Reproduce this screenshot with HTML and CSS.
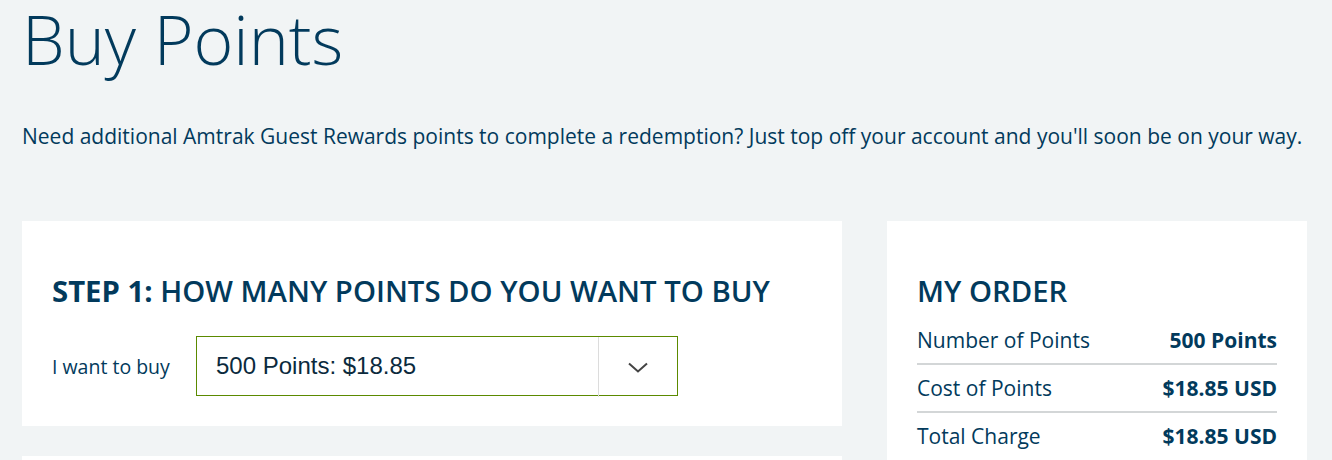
FILE: index.html
```html
<!DOCTYPE html>
<html lang="en">
<head>
<meta charset="utf-8">
<title>Buy Points</title>
<link rel="stylesheet" href="styles.css">
</head>
<body>
<main class="page">
  <h1 class="page-title">Buy Points</h1>
  <p class="intro">Need additional Amtrak Guest Rewards points to complete a redemption? Just top off your account and you'll soon be on your way.</p>
  <div class="layout">
    <div class="main-col">
      <section class="card step-card">
        <h2 class="card-title"><strong>STEP 1:</strong> HOW MANY POINTS DO YOU WANT TO BUY</h2>
        <div class="buy-row">
          <span class="buy-label">I want to buy</span>
          <div class="select">
            <span class="select-value">500 Points: $18.85</span>
            <span class="select-arrow">
              <svg width="20" height="11" viewBox="0 0 20 11" aria-hidden="true"><path d="M1 1.5 L10 9.5 L19 1.5" fill="none" stroke="#444" stroke-width="2"/></svg>
            </span>
          </div>
        </div>
      </section>
      <section class="card next-card"></section>
    </div>
    <aside class="card order-card">
      <h2 class="card-title order-title">MY ORDER</h2>
      <div class="order-row"><span>Number of Points</span><b>500 Points</b></div>
      <div class="order-row"><span>Cost of Points</span><b>$18.85 USD</b></div>
      <div class="order-row"><span>Total Charge</span><b>$18.85 USD</b></div>
    </aside>
  </div>
</main>
</body>
</html>
```
FILE: styles.css
```css
html, body {
  margin: 0;
  padding: 0;
  background: #f1f4f5;
}
body {
  font-family: "Open Sans", "Noto Sans", sans-serif;
  color: #023a5c;
  height: 460px;
  overflow: hidden;
}
.page {
  padding: 0 22px;
}
.page-title {
  margin: 0;
  padding-top: 5px;
  font-size: 68px;
  font-weight: 300;
  line-height: 68px;
  color: #023a5c;
}
.intro {
  margin: 48px 0 0;
  font-size: 21px;
  line-height: 30px;
}
.layout {
  display: flex;
  gap: 45px;
  margin-top: 70px;
  align-items: flex-start;
}
.main-col {
  width: 820px;
  display: flex;
  flex-direction: column;
  gap: 30px;
}
.card {
  background: #fff;
}
.step-card {
  padding: 50px 30px 30px;
}
.next-card {
  height: 200px;
}
.card-title {
  margin: 0;
  font-size: 29.3px;
  font-weight: 600;
  line-height: 40px;
}
.card-title strong {
  font-weight: 700;
}
.buy-row {
  display: flex;
  align-items: center;
  margin-top: 25px;
}
.buy-label {
  width: 144px;
  font-size: 19.5px;
}
.select {
  width: 480px;
  height: 58px;
  border: 1px solid #5b8a00;
  display: flex;
  align-items: center;
}
.select-value {
  flex: 1;
  padding-left: 19px;
  font-family: "Liberation Sans", Arial, sans-serif;
  font-size: 24px;
  color: #0b2a3d;
}
.select-arrow {
  width: 78px;
  height: 60px;
  margin-top: 2px;
  border-left: 1px solid #dcdcdc;
  display: flex;
  align-items: center;
  justify-content: center;
}
.order-card {
  width: 420px;
  box-sizing: border-box;
  padding: 50px 30px 30px;
  height: 300px;
}
.order-title {
  margin-bottom: 6px;
}
.order-row {
  display: flex;
  justify-content: space-between;
  align-items: center;
  font-size: 21px;
  height: 46px;
  border-bottom: 2px solid #d3d6d7;
}
.order-row:last-child {
  border-bottom: none;
}
.order-row b {
  font-weight: 700;
  font-size: 21px;
}
```
